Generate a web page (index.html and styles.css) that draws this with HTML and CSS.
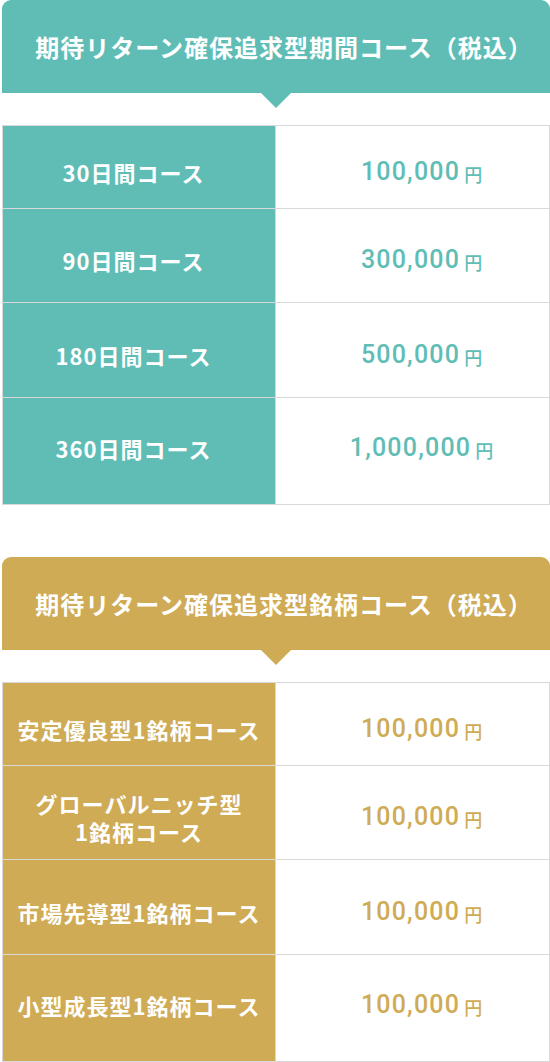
FILE: index.html
```html
<!DOCTYPE html>
<html lang="ja">
<head>
<meta charset="utf-8">
<title>コース料金</title>
<link rel="stylesheet" href="styles.css">
</head>
<body>
<div class="page">
  <section class="plan plan--teal">
    <h2 class="plan__title">期待リターン確保追求型期間コース（税込）</h2>
    <div class="plan__table">
      <div class="plan__row">
        <div class="plan__label plan__label--short">30日間コース</div>
        <div class="plan__value"><span class="plan__num">100,000</span><span class="plan__yen">円</span></div>
      </div>
      <div class="plan__row">
        <div class="plan__label plan__label--short">90日間コース</div>
        <div class="plan__value"><span class="plan__num">300,000</span><span class="plan__yen">円</span></div>
      </div>
      <div class="plan__row">
        <div class="plan__label plan__label--short">180日間コース</div>
        <div class="plan__value"><span class="plan__num">500,000</span><span class="plan__yen">円</span></div>
      </div>
      <div class="plan__row">
        <div class="plan__label plan__label--short">360日間コース</div>
        <div class="plan__value"><span class="plan__num">1,000,000</span><span class="plan__yen">円</span></div>
      </div>
    </div>
  </section>

  <section class="plan plan--gold">
    <h2 class="plan__title">期待リターン確保追求型銘柄コース（税込）</h2>
    <div class="plan__table">
      <div class="plan__row">
        <div class="plan__label">安定優良型1銘柄コース</div>
        <div class="plan__value"><span class="plan__num">100,000</span><span class="plan__yen">円</span></div>
      </div>
      <div class="plan__row">
        <div class="plan__label">グローバルニッチ型<br>1銘柄コース</div>
        <div class="plan__value"><span class="plan__num">100,000</span><span class="plan__yen">円</span></div>
      </div>
      <div class="plan__row">
        <div class="plan__label">市場先導型1銘柄コース</div>
        <div class="plan__value"><span class="plan__num">100,000</span><span class="plan__yen">円</span></div>
      </div>
      <div class="plan__row">
        <div class="plan__label">小型成長型1銘柄コース</div>
        <div class="plan__value"><span class="plan__num">100,000</span><span class="plan__yen">円</span></div>
      </div>
    </div>
  </section>
</div>
</body>
</html>
```

FILE: styles.css
```css
* {
  box-sizing: border-box;
}

html,
body {
  margin: 0;
  padding: 0;
  background: #ffffff;
}

body {
  font-family: "Noto Sans CJK JP", "Noto Sans", sans-serif;
  color: #333333;
}

.page {
  width: 548px;
  margin-left: 2px;
  display: flex;
  flex-direction: column;
  gap: 52px;
}

.plan {
  --accent: #5fbdb6;
}

.plan--teal {
  --accent: #5fbdb6;
}

.plan--gold {
  --accent: #cfab55;
}

.plan__title {
  position: relative;
  margin: 0 0 32px;
  height: 93px;
  display: flex;
  align-items: center;
  justify-content: center;
  padding-left: 16px;
  background: var(--accent);
  border-radius: 9px 9px 0 0;
  color: #ffffff;
  font-size: 24px;
  font-weight: 700;
  letter-spacing: 1px;
  line-height: 1;
}

.plan__title::after {
  content: "";
  position: absolute;
  left: 50%;
  top: 100%;
  margin-left: -15px;
  border-style: solid;
  border-width: 15px 15px 0 15px;
  border-color: var(--accent) transparent transparent transparent;
}

.plan__table {
  border-top: 1px solid #d9d9d9;
  border-left: 1px solid #d9d9d9;
  display: flex;
  flex-direction: column;
}

.plan__row {
  display: grid;
  grid-template-columns: 273px 274px;
}

.plan__row > div {
  border-right: 1px solid #d9d9d9;
  border-bottom: 1px solid #d9d9d9;
  display: flex;
  align-items: center;
  justify-content: center;
}

.plan__row:nth-child(1) > div {
  height: 83px;
  padding-top: 9px;
}

.plan__row:nth-child(2) > div {
  height: 94px;
  padding-top: 8px;
}

.plan__row:nth-child(3) > div {
  height: 95px;
  padding-top: 9px;
}

.plan__row:nth-child(4) > div {
  height: 107px;
  padding-bottom: 7px;
}

.plan__label {
  background: var(--accent);
  color: #ffffff;
  font-size: 22px;
  font-weight: 700;
  letter-spacing: 1px;
  line-height: 28px;
  text-align: center;
}

.plan__label--short {
  padding-right: 11px;
}

.plan__value {
  background: #ffffff;
  color: var(--accent);
  padding-left: 18px;
}

.plan__num {
  font-family: Roboto, "Noto Sans", sans-serif;
  font-size: 25px;
  font-weight: 500;
  letter-spacing: 1.2px;
  line-height: 1;
}

.plan__yen {
  font-family: "Noto Sans CJK JP", sans-serif;
  font-size: 18px;
  font-weight: 500;
  margin-left: 4px;
  line-height: 1;
  position: relative;
  top: 2px;
}
```
